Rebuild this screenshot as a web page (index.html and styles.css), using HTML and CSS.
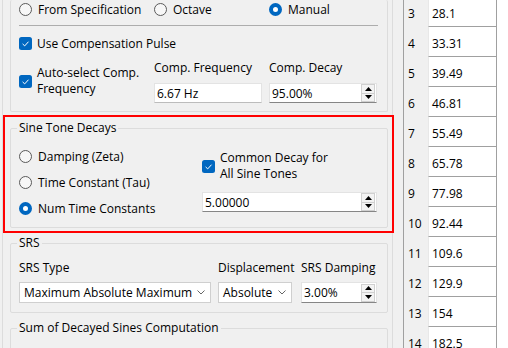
FILE: index.html
```html
<!DOCTYPE html>
<html>
<head>
<meta charset="utf-8">
<link rel="stylesheet" href="styles.css">
</head>
<body>
<div class="app">
  <div class="left">
    <div class="scroll">
      <div class="group group-top">
        <div class="grid3 radio-row">
          <label class="opt"><span class="radio"></span>From Specification</label>
          <label class="opt"><span class="radio"></span>Octave</label>
          <label class="opt"><span class="radio on"></span>Manual</label>
        </div>
        <div class="sep"></div>
        <div class="opt cb-row">
          <svg class="check" viewBox="0 0 13 13"><rect width="13" height="13" rx="2.5" fill="#0067c0"/><path d="M3.6 6.9 L5.7 8.9 L9.5 4.7" stroke="#fff" stroke-width="1" fill="none"/></svg>
          <span>Use Compensation Pulse</span>
        </div>
        <div class="grid3 comp-row">
          <div class="opt opt-multi">
            <svg class="check" viewBox="0 0 13 13"><rect width="13" height="13" rx="2.5" fill="#0067c0"/><path d="M3.6 6.9 L5.7 8.9 L9.5 4.7" stroke="#fff" stroke-width="1" fill="none"/></svg>
            <span class="two"><span class="ln">Auto-select Comp.</span><span class="ln">Frequency</span></span>
          </div>
          <div class="field">
            <div class="lbl">Comp. Frequency</div>
            <div class="edit">6.67 Hz</div>
          </div>
          <div class="field">
            <div class="lbl">Comp. Decay</div>
            <div class="edit spin"><span class="txt">95.00%</span>
              <span class="btns">
                <span class="btn"><svg viewBox="0 0 7 4"><path d="M0 4 L3.5 0 L7 4Z" fill="#000"/></svg></span>
                <span class="btn"><svg viewBox="0 0 7 4"><path d="M0 0 L3.5 4 L7 0Z" fill="#000"/></svg></span>
              </span>
            </div>
          </div>
        </div>
      </div>

      <div class="highlight">
        <fieldset class="group decays">
          <legend>Sine Tone Decays</legend>
          <div class="decay-grid">
            <div class="radios">
              <label class="opt"><span class="radio"></span>Damping (Zeta)</label>
              <label class="opt"><span class="radio"></span>Time Constant (Tau)</label>
              <label class="opt"><span class="radio on"></span>Num Time Constants</label>
            </div>
            <div class="common">
              <div class="opt opt-multi">
                <svg class="check" viewBox="0 0 13 13"><rect width="13" height="13" rx="2.5" fill="#0067c0"/><path d="M3.6 6.9 L5.7 8.9 L9.5 4.7" stroke="#fff" stroke-width="1" fill="none"/></svg>
                <span class="two"><span class="ln">Common Decay for</span><span class="ln">All Sine Tones</span></span>
              </div>
              <div class="edit spin wide"><span class="txt">5.00000</span>
                <span class="btns">
                  <span class="btn"><svg viewBox="0 0 7 4"><path d="M0 4 L3.5 0 L7 4Z" fill="#000"/></svg></span>
                  <span class="btn"><svg viewBox="0 0 7 4"><path d="M0 0 L3.5 4 L7 0Z" fill="#000"/></svg></span>
                </span>
              </div>
            </div>
          </div>
        </fieldset>
      </div>

      <fieldset class="group srs">
        <legend>SRS</legend>
        <div class="srs-grid">
          <div class="lbl">SRS Type</div>
          <div class="lbl">Displacement</div>
          <div class="lbl">SRS Damping</div>
          <div class="combo"><span>Maximum Absolute Maximum</span><svg class="chev" viewBox="0 0 8 5"><path d="M0.5 0.5 L4 4 L7.5 0.5" stroke="#666" stroke-width="1" fill="none"/></svg></div>
          <div class="combo small"><span>Absolute</span><svg class="chev" viewBox="0 0 8 5"><path d="M0.5 0.5 L4 4 L7.5 0.5" stroke="#666" stroke-width="1" fill="none"/></svg></div>
          <div class="edit spin srs-spin"><span class="txt">3.00%</span>
            <span class="btns">
              <span class="btn"><svg viewBox="0 0 7 4"><path d="M0 4 L3.5 0 L7 4Z" fill="#000"/></svg></span>
              <span class="btn"><svg viewBox="0 0 7 4"><path d="M0 0 L3.5 4 L7 0Z" fill="#000"/></svg></span>
            </span>
          </div>
        </div>
      </fieldset>

      <fieldset class="group sum">
        <legend>Sum of Decayed Sines Computation</legend>
        <div class="sum-body"></div>
      </fieldset>
    </div>
  </div>

  <div class="table">
    <div class="row"><div class="num">3</div><div class="val"><div class="cell">28.1</div></div></div>
    <div class="row"><div class="num">4</div><div class="val"><div class="cell">33.31</div></div></div>
    <div class="row"><div class="num">5</div><div class="val"><div class="cell">39.49</div></div></div>
    <div class="row"><div class="num">6</div><div class="val"><div class="cell">46.81</div></div></div>
    <div class="row"><div class="num">7</div><div class="val"><div class="cell">55.49</div></div></div>
    <div class="row"><div class="num">8</div><div class="val"><div class="cell">65.78</div></div></div>
    <div class="row"><div class="num">9</div><div class="val"><div class="cell">77.98</div></div></div>
    <div class="row"><div class="num">10</div><div class="val"><div class="cell">92.44</div></div></div>
    <div class="row"><div class="num">11</div><div class="val"><div class="cell">109.6</div></div></div>
    <div class="row"><div class="num">12</div><div class="val"><div class="cell">129.9</div></div></div>
    <div class="row"><div class="num">13</div><div class="val"><div class="cell">154</div></div></div>
    <div class="row"><div class="num">14</div><div class="val"><div class="cell">182.5</div></div></div>
  </div>
</div>
</body>
</html>
```
FILE: styles.css
```css
* { box-sizing: border-box; }
body {
  margin: 0;
  background: #f0f0f0;
  font-family: "Open Sans", "Noto Sans", sans-serif;
  font-size: 12px;
  color: #000;
}
.app {
  display: flex;
  width: 508px;
  height: 348px;
  overflow: hidden;
}
.left { flex: 0 0 393px; }
.scroll {
  margin-left: 2px;
  width: 391px;
  height: 348px;
  border-left: 1px solid #dcdcdc;
  border-right: 1px solid #dcdcdc;
}
.group {
  border: 1px solid #dcdcdc;
  border-radius: 2px;
  width: 378px;
  margin: 0 0 0 7px;
  padding: 0 10px 0 8px;
  min-width: 0;
}
.group-top {
  border-top: none;
  padding-bottom: 8px;
}
legend {
  padding: 0 2px;
  margin-left: -2px;
  line-height: 18px;
  height: 18px;
}
.opt {
  display: flex;
  align-items: center;
  height: 18px;
  white-space: nowrap;
}
.opt-multi { height: auto; }
.two { display: flex; flex-direction: column; margin-left: 5px; }
.two .ln { display: block; height: 16px; line-height: 16px; }
.radio {
  width: 13px;
  height: 13px;
  border-radius: 50%;
  border: 1px solid #5a5a5a;
  background: #f7f7f7;
  margin-right: 6px;
  flex: 0 0 13px;
}
.radio.on {
  border: 4px solid #0067c0;
  background: #fff;
}
.check { width: 13px; height: 13px; flex: 0 0 13px; }
.cb-row .check { margin-right: 5px; }
.grid3 {
  display: grid;
  grid-template-columns: 128px 108px 108px;
  column-gap: 7px;
}
.sep {
  margin-top: 7px;
  height: 1px;
  background: #adadad;
  margin-right: -1px;
}
.cb-row { margin-top: 8px; }
.comp-row { margin-top: 7px; }
.comp-row .opt-multi { align-self: center; }
.lbl { line-height: 18px; height: 18px; white-space: nowrap; }
.field .edit { margin-top: 6px; }
.edit {
  height: 20px;
  background: #fff;
  border: 1px solid #e3e3e3;
  border-bottom-color: #bcbcbc;
  padding-left: 2px;
  display: flex;
  align-items: center;
}
.spin { border-bottom-color: #868686; padding-right: 0; }
.spin .txt { flex: 1; }
.btns {
  display: flex;
  flex-direction: column;
  width: 14px;
  height: 18px;
  margin-right: 1px;
}
.btn {
  flex: 1;
  border: 1px solid #d0d0d0;
  background: #f3f3f3;
  display: flex;
  align-items: center;
  justify-content: center;
}
.btn + .btn { border-top: none; }
.btn svg { width: 7px; height: 4px; }

.highlight {
  margin-top: 3px;
  width: 391px;
  border: 2px solid #ff0000;
  padding: 2px 0 3px 0;
}
.decays { margin-left: 5px; padding-bottom: 10px; }
.decay-grid {
  display: grid;
  grid-template-columns: 183px 175px;
  padding-top: 10px;
}
.radios { display: flex; flex-direction: column; gap: 8px; }
.common { margin-top: 3px; }
.wide { margin-top: 10px; }

.srs { margin-top: 1px; padding-bottom: 9px; }
.srs-grid {
  display: grid;
  grid-template-columns: 192px 76px 76px;
  column-gap: 7px;
  row-gap: 5px;
  padding-top: 7px;
}
.combo {
  height: 21px;
  background: #fff;
  border: 1px solid #cfcfcf;
  display: flex;
  align-items: center;
  padding-left: 4px;
  padding-right: 5px;
  white-space: nowrap;
}
.combo span { flex: 1; }
.combo.small { width: 74px; }
.chev { width: 8px; height: 5px; }
.srs-spin { height: 21px; }

.sum { margin-top: 6px; }
.sum-body { height: 30px; }

.table {
  flex: 1;
  margin-left: 10px;
  margin-top: -3px;
  border-left: 1px solid #a0a0a0;
}
.row {
  display: flex;
  height: 30px;
}
.num {
  width: 24px;
  padding: 3px 0 0 4px;
  display: flex;
  align-items: center;
}
.val {
  flex: 1;
  background: #fff;
}
.cell {
  width: 69px;
  height: 30px;
  border-right: 1px solid #a0a0a0;
  border-bottom: 1px solid #a0a0a0;
  border-left: 1px solid #e8e8e8;
  padding: 3px 0 0 3px;
  display: flex;
  align-items: center;
}
```
